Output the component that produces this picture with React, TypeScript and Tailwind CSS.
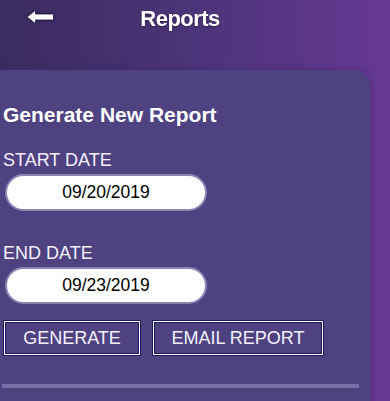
import React from 'react';

const DateField: React.FC<{ value: string }> = ({ value }) => (
    <div className="ml-[5px] flex h-[37px] w-[202px] items-center justify-center rounded-full border-2 border-[#8d84b4] bg-white text-[17.5px] text-black">
        {value}
    </div>
);

export default function App() {
    return (
        <div
            className="relative h-[401px] w-[390px] overflow-hidden bg-gradient-to-r from-[#3a2c5e] via-[#4c3479] to-[#673893] text-white"
            style={{ fontFamily: 'Helvetica, "Liberation Sans", Arial, sans-serif' }}
        >
            {/* Header */}
            <div className="relative flex h-[70px] items-start justify-center pr-[30px] pt-[5px]">
                <svg
                    className="absolute left-[27px] top-[10px] drop-shadow-[0_0_1px_#1a1440]"
                    width="27"
                    height="14"
                    viewBox="0 0 27 14"
                >
                    <path d="M0 7 L8.5 0.3 L8.5 4 L26.5 4 L26.5 10 L8.5 10 L8.5 13.7 Z" fill="white" stroke="#1d1748" strokeWidth="0.8" />
                </svg>
                <h1 className="text-[22px] font-bold leading-[28px] tracking-tight drop-shadow-[0_1px_1px_rgba(0,0,0,0.4)]">Reports</h1>
            </div>

            {/* Card */}
            <div className="h-[340px] w-[370px] rounded-tr-[16px] bg-[#4e4281] pt-[32px] shadow-[0_0_6px_rgba(60,40,110,0.6)]">
                <h2 className="pl-[3px] text-[21px] font-bold leading-[26px]">Generate New Report</h2>

                <div className="mt-[21px] pl-[3px] text-[18px] leading-[22px] text-[#f3f0fb]">START DATE</div>
                <div className="mt-[3px]">
                    <DateField value="09/20/2019" />
                </div>

                <div className="mt-[31px] pl-[3px] text-[18px] leading-[22px] text-[#f3f0fb]">END DATE</div>
                <div className="mt-[3px]">
                    <DateField value="09/23/2019" />
                </div>

                <div className="mt-[17px] flex gap-[13px] pl-[4px]">
                    <button className="flex h-[34px] w-[136px] items-center justify-center border-[1.5px] border-white text-[18px] text-[#f3f0fb] shadow-[inset_0_0_0_1px_#1e1a6a,0_0_0_1px_#1e1a6a]">
                        GENERATE
                    </button>
                    <button className="flex h-[34px] w-[170px] items-center justify-center border-[1.5px] border-white text-[18px] text-[#f3f0fb] shadow-[inset_0_0_0_1px_#1e1a6a,0_0_0_1px_#1e1a6a]">
                        EMAIL REPORT
                    </button>
                </div>

                <div className="ml-[2px] mt-[29px] h-[4px] w-[357px] bg-[#7a6fa6]" />
            </div>
        </div>
    );
}
